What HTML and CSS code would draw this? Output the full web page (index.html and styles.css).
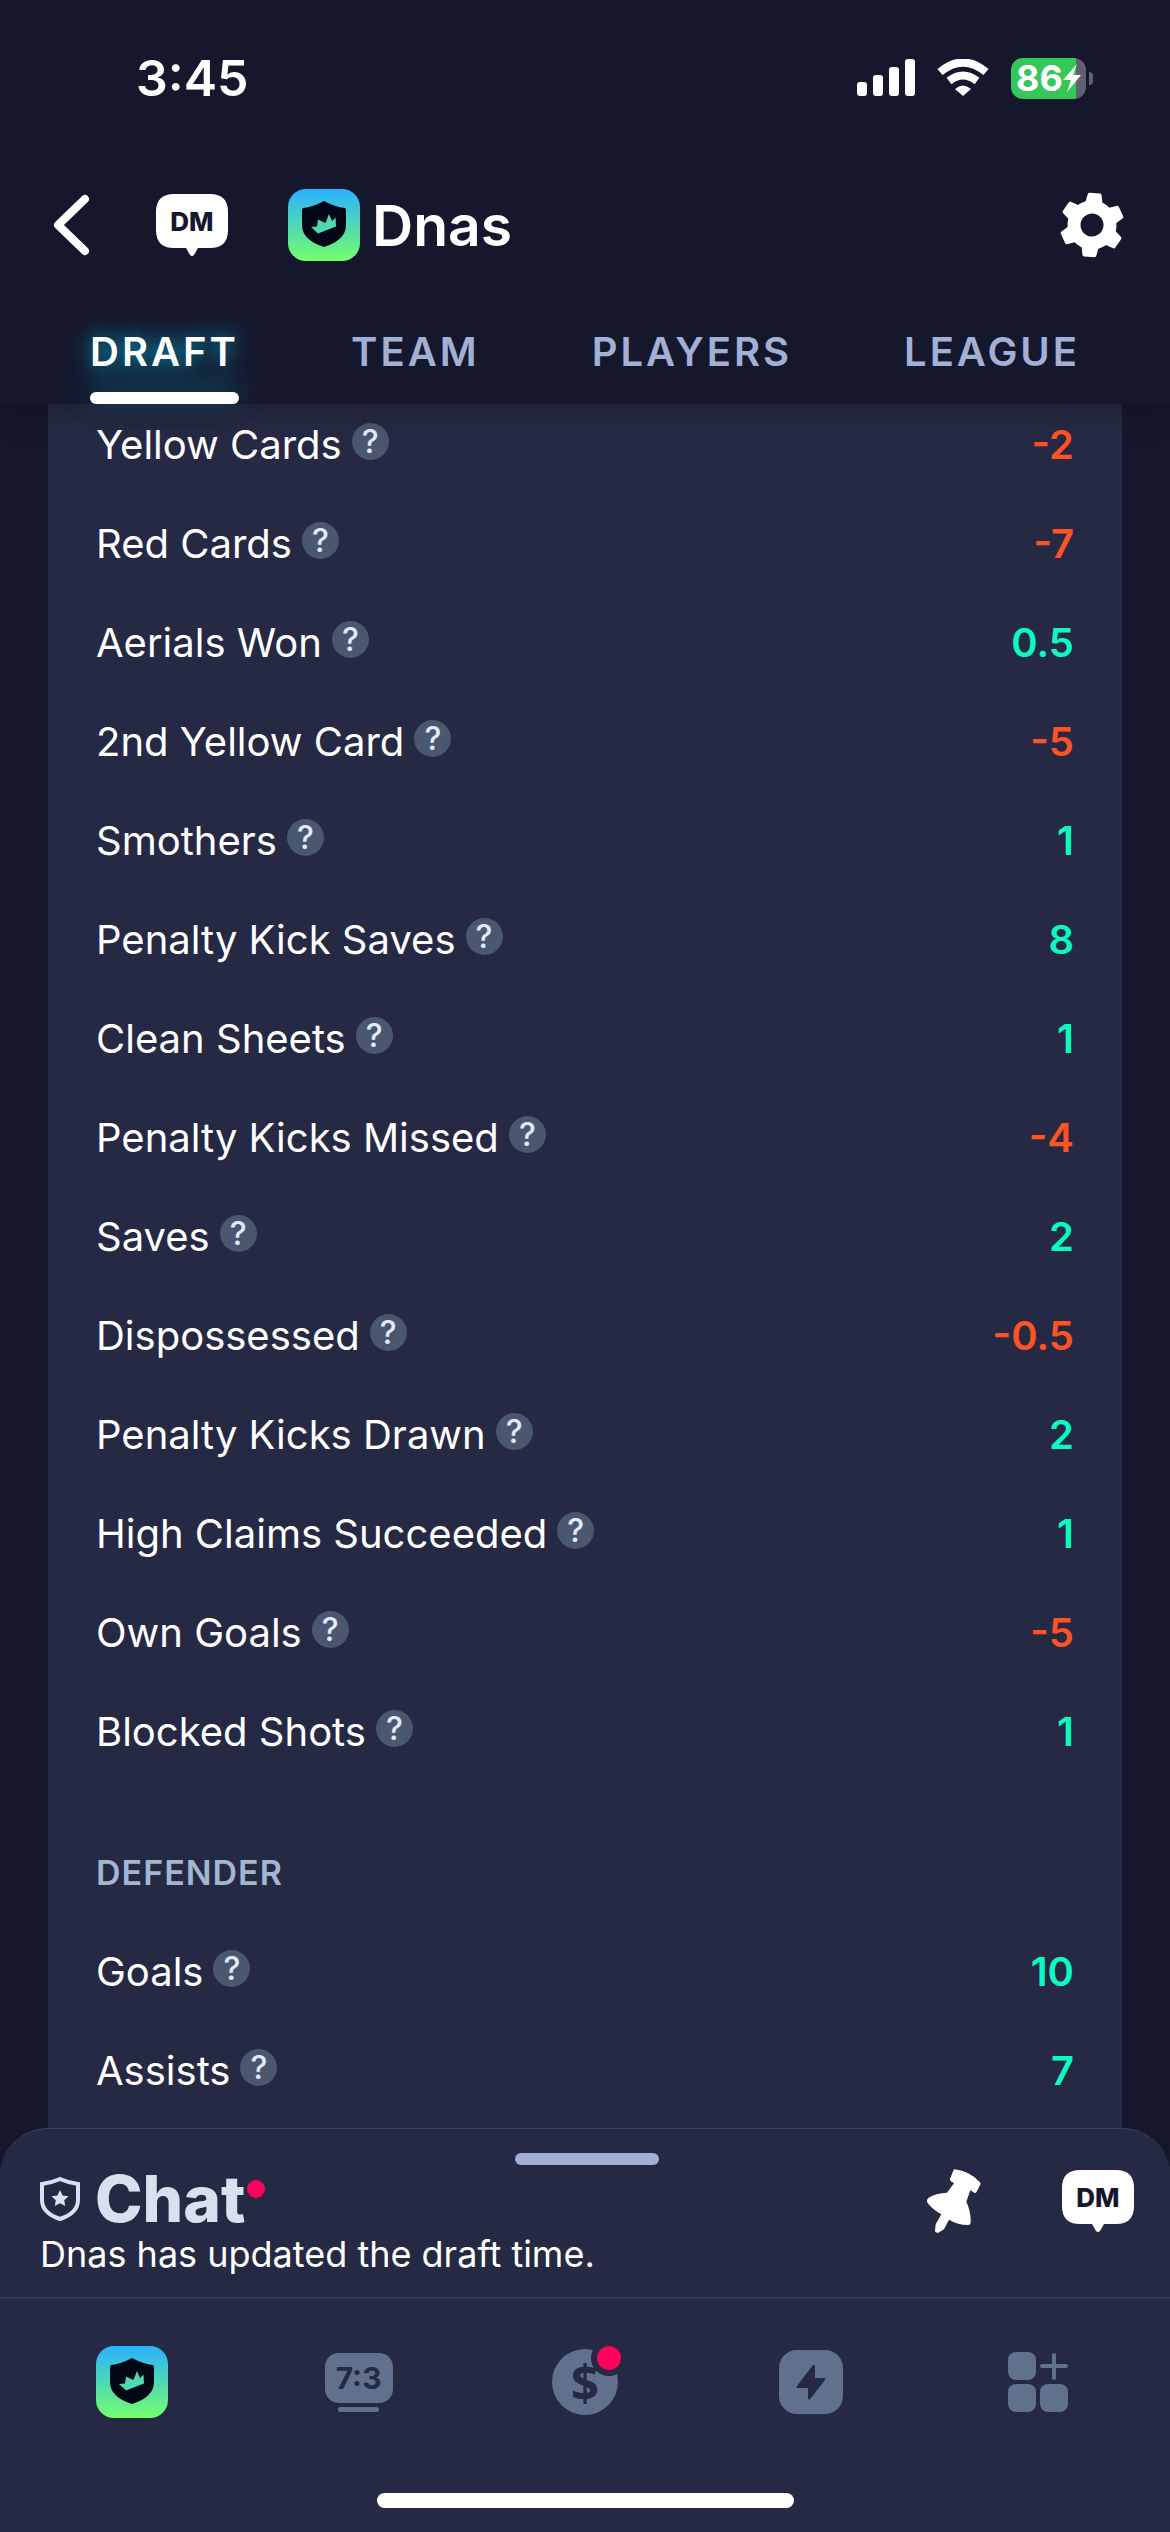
FILE: index.html
```html
<!DOCTYPE html>
<html lang="en">
<head>
  <meta charset="UTF-8" />
  <meta name="viewport" content="width=device-width, initial-scale=1.0"/>
  <title>Dnas - Draft</title>
  <link rel="stylesheet" href="styles.css">
</head>
<body>
  <!-- Shared icons -->
  <svg class="sprite" aria-hidden="true">
    <defs>
      <linearGradient id="logoFill" x1="0" y1="0" x2="0" y2="1">
        <stop offset="0" stop-color="#2bb0ff"/>
        <stop offset="1" stop-color="#74ff6c"/>
      </linearGradient>
    </defs>
    <symbol id="logo" viewBox="0 0 72 72">
      <rect width="72" height="72" rx="18" fill="url(#logoFill)"/>
      <path d="M36 12 Q47 18 57 19 Q58 20 58 22 V36 Q58 51 36 58 Q14 51 14 36 V22 Q14 20 15 19 Q25 18 36 12Z" fill="#020716"/>
      <path d="M23 38 L29 37.500 L30 30.500 L37.500 34 L41 25 L44 32 L47.500 28.500 L48 37.500 L30 44.500Z" fill="#50d9b0"/>
    </symbol>
    <symbol id="bubble" viewBox="0 0 72 62">
      <path d="M18 0 H54 Q72 0 72 18 V36 Q72 54 54 54 H42 L38 61 Q36 63 34 61 L30 54 H18 Q0 54 0 36 V18 Q0 0 18 0Z" fill="#fff"/>
    </symbol>
  </svg>

  <div class="app">
    <header class="header">
      <div class="status-bar">
        <span class="time">3:45</span>
        <div class="status-icons">
          <svg width="58" height="38" viewBox="0 0 58 38" fill="#fff">
            <rect x="0" y="23" width="10" height="14" rx="3"/>
            <rect x="16" y="16" width="10" height="21" rx="3"/>
            <rect x="32" y="8" width="10" height="29" rx="3"/>
            <rect x="48" y="0" width="10" height="37" rx="3"/>
          </svg>
          <svg width="52" height="38" viewBox="0 0 52 38">
            <path d="M3 13 Q26 -6 49 13" fill="none" stroke="#fff" stroke-width="8"/>
            <path d="M12 22 Q26 11 40 22" fill="none" stroke="#fff" stroke-width="8"/>
            <path d="M26 37 L18 30 Q26 23 34 30Z" fill="#fff"/>
          </svg>
          <div class="battery">
            <span>86</span>
            <svg width="18" height="28" viewBox="0 0 18 28"><path d="M14 0 L0 16 H8 L4 28 L18 11 H10Z" fill="#fff"/></svg>
          </div>
        </div>
      </div>

      <div class="title-bar">
        <button class="icon-btn back-btn" aria-label="Back">
          <svg width="38" height="62" viewBox="0 0 38 62"><path d="M33 5 L6 31 L33 57" fill="none" stroke="#fff" stroke-width="8" stroke-linecap="round" stroke-linejoin="round"/></svg>
        </button>
        <button class="icon-btn dm-btn">
          <svg width="72" height="62"><use href="#bubble"/></svg>
          <span>DM</span>
        </button>
        <div class="league">
          <svg width="72" height="72"><use href="#logo"/></svg>
          <h1>Dnas</h1>
        </div>
        <button class="icon-btn settings-btn" aria-label="Settings">
          <svg width="66" height="66" viewBox="-33 -33 66 66">
            <g transform="rotate(5)" fill="#fff">
              <circle r="18" fill="none" stroke="#fff" stroke-width="13"/>
              <path id="teeth" d="M-9 -20 L-7 -30 Q-7 -32 -5 -32 H5 Q7 -32 7 -30 L9 -20Z M-9 20 L-7 30 Q-7 32 -5 32 H5 Q7 32 7 30 L9 20Z"/>
              <use href="#teeth" transform="rotate(60)"/>
              <use href="#teeth" transform="rotate(120)"/>
            </g>
          </svg>
        </button>
      </div>

      <nav class="tabs">
        <a href="#draft" class="active">DRAFT</a>
        <a href="#team">TEAM</a>
        <a href="#players">PLAYERS</a>
        <a href="#league">LEAGUE</a>
      </nav>
    </header>

    <main>
      <div class="card">
        <table>
          <tbody>
            <tr>
              <td>Yellow Cards<button class="help">?</button></td>
              <td class="points minus">-2</td>
            </tr>
            <tr>
              <td>Red Cards<button class="help">?</button></td>
              <td class="points minus">-7</td>
            </tr>
            <tr>
              <td>Aerials Won<button class="help">?</button></td>
              <td class="points">0.5</td>
            </tr>
            <tr>
              <td>2nd Yellow Card<button class="help">?</button></td>
              <td class="points minus">-5</td>
            </tr>
            <tr>
              <td>Smothers<button class="help">?</button></td>
              <td class="points">1</td>
            </tr>
            <tr>
              <td>Penalty Kick Saves<button class="help">?</button></td>
              <td class="points">8</td>
            </tr>
            <tr>
              <td>Clean Sheets<button class="help">?</button></td>
              <td class="points">1</td>
            </tr>
            <tr>
              <td>Penalty Kicks Missed<button class="help">?</button></td>
              <td class="points minus">-4</td>
            </tr>
            <tr>
              <td>Saves<button class="help">?</button></td>
              <td class="points">2</td>
            </tr>
            <tr>
              <td>Dispossessed<button class="help">?</button></td>
              <td class="points minus">-0.5</td>
            </tr>
            <tr>
              <td>Penalty Kicks Drawn<button class="help">?</button></td>
              <td class="points">2</td>
            </tr>
            <tr>
              <td>High Claims Succeeded<button class="help">?</button></td>
              <td class="points">1</td>
            </tr>
            <tr>
              <td>Own Goals<button class="help">?</button></td>
              <td class="points minus">-5</td>
            </tr>
            <tr>
              <td>Blocked Shots<button class="help">?</button></td>
              <td class="points">1</td>
            </tr>
          </tbody>
          <tbody>
            <tr>
              <th colspan="2">DEFENDER</th>
            </tr>
            <tr>
              <td>Goals<button class="help">?</button></td>
              <td class="points">10</td>
            </tr>
            <tr class="last">
              <td>Assists<button class="help">?</button></td>
              <td class="points">7</td>
            </tr>
          </tbody>
        </table>
      </div>
    </main>

    <section class="chat">
      <div class="handle"></div>
      <div class="chat-row">
        <div class="chat-info">
          <h2>
            <svg width="40" height="46" viewBox="0 0 40 46">
              <path d="M20 3 Q29 7 38 8 V24 Q38 37 20 43 Q2 37 2 24 V8 Q11 7 20 3Z" fill="none" stroke="#dbe0f1" stroke-width="4"/>
              <path d="M20 14 L22.600 19.500 L28.500 20.200 L24.200 24.300 L25.300 30 L20 27.200 L14.700 30 L15.800 24.300 L11.500 20.200 L17.400 19.500Z" fill="#dbe0f1"/>
            </svg>
            <span class="chat-label">Chat</span>
            <span class="unread"></span>
          </h2>
          <p>Dnas has updated the draft time.</p>
        </div>
        <div class="chat-actions">
          <button class="icon-btn" aria-label="Pinned messages">
            <svg width="56" height="66" viewBox="49 51 168 198"><path d="M135 55 Q180 60 211 94 Q214 97 212 101 L200 124 Q198 128 194 125 L182 118 L170 152 Q184 180 183 215 Q182 223 174 222 Q145 222 118 206 L103 235 L86 245 Q77 247 76 240 L78 220 L95 190 Q68 175 54 156 Q48 148 57 140 Q78 126 112 125 L133 97 L124 91 Q119 88 121 83 L131 59 Q132 55 135 55Z" fill="#fff"/></svg>
          </button>
          <button class="icon-btn dm-btn">
            <svg width="72" height="62"><use href="#bubble"/></svg>
            <span>DM</span>
          </button>
        </div>
      </div>
    </section>

    <footer class="bottom-nav">
      <nav class="nav-items">
        <a href="#home" aria-label="Home"><svg width="72" height="72"><use href="#logo"/></svg></a>
        <a href="#scores" class="scores"><span class="screen">7:3</span></a>
        <a href="#money" class="money"><span class="coin">$</span><span class="badge"></span></a>
        <a href="#boost" aria-label="Boost">
          <svg width="64" height="64" viewBox="0 0 64 64">
            <rect width="64" height="64" rx="18" fill="#61708c"/>
            <path d="M34 15 L18 36 Q17 38 19 38 H29 V48 Q30 51 32 48 L46 30 Q47 28 45 28 H36 V16 Q35 14 34 15Z" fill="#252943"/>
          </svg>
        </a>
        <a href="#more" aria-label="More">
          <svg width="60" height="60" viewBox="0 0 60 60" fill="#61708c">
            <rect width="28" height="28" rx="8"/>
            <rect y="32" width="28" height="28" rx="8"/>
            <rect x="32" y="32" width="28" height="28" rx="8"/>
            <path d="M46 3 V26 M34 14 H58" stroke="#61708c" stroke-width="4" stroke-linecap="round"/>
          </svg>
        </a>
      </nav>
      <div class="home-bar"></div>
    </footer>
  </div>
</body>
</html>
```
FILE: styles.css
```css
* {
  margin: 0;
  padding: 0;
  box-sizing: border-box;
}

body {
  background: #15182d;
  color: #fff;
  font-family: 'Inter', sans-serif;
}

svg {
  display: block;
}

a {
  text-decoration: none;
}

.sprite {
  position: absolute;
  width: 0;
  height: 0;
}

.app {
  min-height: 100vh;
  display: flex;
  flex-direction: column;
}

.icon-btn {
  background: none;
  border: none;
  color: inherit;
  font-family: inherit;
  cursor: pointer;
}

/* Header */
.header {
  position: relative;
  z-index: 1;
  background: #15182d;
  box-shadow: 0 0 32px rgba(0,0,0,0.35);
}

.status-bar {
  display: flex;
  justify-content: space-between;
  align-items: center;
  height: 156px;
  padding: 0 76px 0 136px;
}

.time {
  font-size: 50px;
  font-weight: 600;
}

.status-icons {
  display: flex;
  align-items: center;
  gap: 22px;
}

.battery {
  position: relative;
  display: flex;
  align-items: center;
  justify-content: center;
  width: 75px;
  height: 41px;
  margin-right: 8px;
  border-radius: 12px;
  background: linear-gradient(to right, #34c759 65px, #5f6072 65px);
  font-size: 36px;
  font-weight: 700;
}

.battery::after {
  content: '';
  position: absolute;
  right: -7px;
  top: 14px;
  width: 4px;
  height: 13px;
  border-radius: 0 4px 4px 0;
  background: #5f6072;
}

.title-bar {
  display: flex;
  align-items: center;
  height: 138px;
  padding: 0 45px 0 52px;
}

.dm-btn {
  position: relative;
  color: #15182d;
}

.dm-btn span {
  position: absolute;
  inset: 0 0 8px;
  display: flex;
  align-items: center;
  justify-content: center;
  font-size: 26px;
  font-weight: 800;
}

.title-bar .dm-btn {
  margin: 0 60px 0 66px;
}

.league {
  display: flex;
  align-items: center;
  gap: 12px;
}

.league h1 {
  font-size: 57px;
  font-weight: 600;
}

.settings-btn {
  margin-left: auto;
}

.tabs {
  display: flex;
  justify-content: space-between;
  padding: 0 90px;
}

.tabs a {
  position: relative;
  height: 110px;
  line-height: 116px;
  color: #a3b0d6;
  font-size: 40px;
  font-weight: 600;
  letter-spacing: 3px;
}

.tabs .active {
  color: #fff;
  text-shadow: 0 0 20px #00b4d8;
}

.tabs .active::after {
  content: '';
  position: absolute;
  left: 0;
  right: 0;
  bottom: 0;
  height: 12px;
  border-radius: 6px;
  background: #fff;
  box-shadow: 0 -8px 28px rgba(0,180,216,0.45);
}

/* Scoring table */
main {
  flex: 1;
  display: grid;
  padding: 0 48px;
}

.card {
  padding: 14px 48px 0;
  background: #252943;
}

table {
  width: 100%;
  border-collapse: collapse;
}

td, th {
  padding-bottom: 45px;
  line-height: 54px;
  font-size: 40px;
  font-weight: 400;
  text-align: left;
}

th {
  padding-top: 42px;
  color: #a0b6d2;
  font-size: 34px;
  font-weight: 600;
  letter-spacing: 1px;
}

.last td {
  padding-bottom: 24px;
}

.help {
  width: 37px;
  height: 37px;
  margin-left: 10px;
  border: none;
  border-radius: 50%;
  background: #4b566f;
  color: #e0eafc;
  font-family: inherit;
  font-size: 32px;
  font-weight: 500;
  line-height: 37px;
  vertical-align: 6px;
  cursor: pointer;
}

.points {
  color: #0bf9c2;
  font-weight: 600;
  text-align: right;
}

.minus {
  color: #fb5324;
}

/* Chat */
.chat {
  height: 169px;
  padding: 24px 36px 0 40px;
  border-top: 1px solid #3b4060;
  border-radius: 48px 48px 0 0;
  background: #252943;
}

.handle {
  width: 144px;
  height: 12px;
  margin: 0 auto;
  border-radius: 6px;
  background: #a3b0d6;
}

.chat-row {
  display: flex;
  justify-content: space-between;
}

.chat h2 {
  display: flex;
  align-items: center;
  height: 67px;
  color: #dbe0f1;
  font-size: 64px;
  font-weight: 800;
}

.chat-label {
  margin-left: 15px;
}

.unread {
  align-self: flex-start;
  width: 18px;
  height: 18px;
  margin: 15px 0 0 2px;
  border-radius: 50%;
  background: #ff005c;
}

.chat p {
  font-size: 36px;
  font-weight: 400;
  line-height: 44px;
}

.chat-actions {
  display: flex;
  align-items: center;
  gap: 80px;
  height: 72px;
}

/* Bottom navigation */
.bottom-nav {
  display: flex;
  flex-direction: column;
  align-items: center;
  height: 235px;
  padding-bottom: 24px;
  border-top: 2px solid #31365b;
  background: #252943;
}

.nav-items {
  flex: 1;
  display: grid;
  grid-template-columns: repeat(5, 1fr);
  width: 100%;
  padding: 47px 19px 0;
}

.nav-items a {
  display: flex;
  align-items: center;
  justify-content: center;
  height: 72px;
}

.nav-items .scores {
  flex-direction: column;
  gap: 4px;
}

.screen {
  display: flex;
  align-items: center;
  justify-content: center;
  width: 68px;
  height: 50px;
  border-radius: 14px;
  background: #61708c;
  color: #252943;
  font-size: 30px;
  font-weight: 700;
}

.scores::after {
  content: '';
  width: 41px;
  height: 5px;
  border-radius: 3px;
  background: #61708c;
}

.money {
  position: relative;
}

.coin {
  width: 66px;
  height: 66px;
  border-radius: 50%;
  background: #61708c;
  color: #252943;
  font-family: 'Open Sans', sans-serif;
  font-size: 50px;
  font-weight: 700;
  line-height: 66px;
  text-align: center;
}

.badge {
  position: absolute;
  top: -6px;
  left: 50%;
  width: 36px;
  height: 36px;
  margin-left: 6px;
  border: 6px solid #252943;
  border-radius: 50%;
  background: #ff005c;
}

.home-bar {
  width: 417px;
  height: 15px;
  border-radius: 8px;
  background: #fff;
}
```
